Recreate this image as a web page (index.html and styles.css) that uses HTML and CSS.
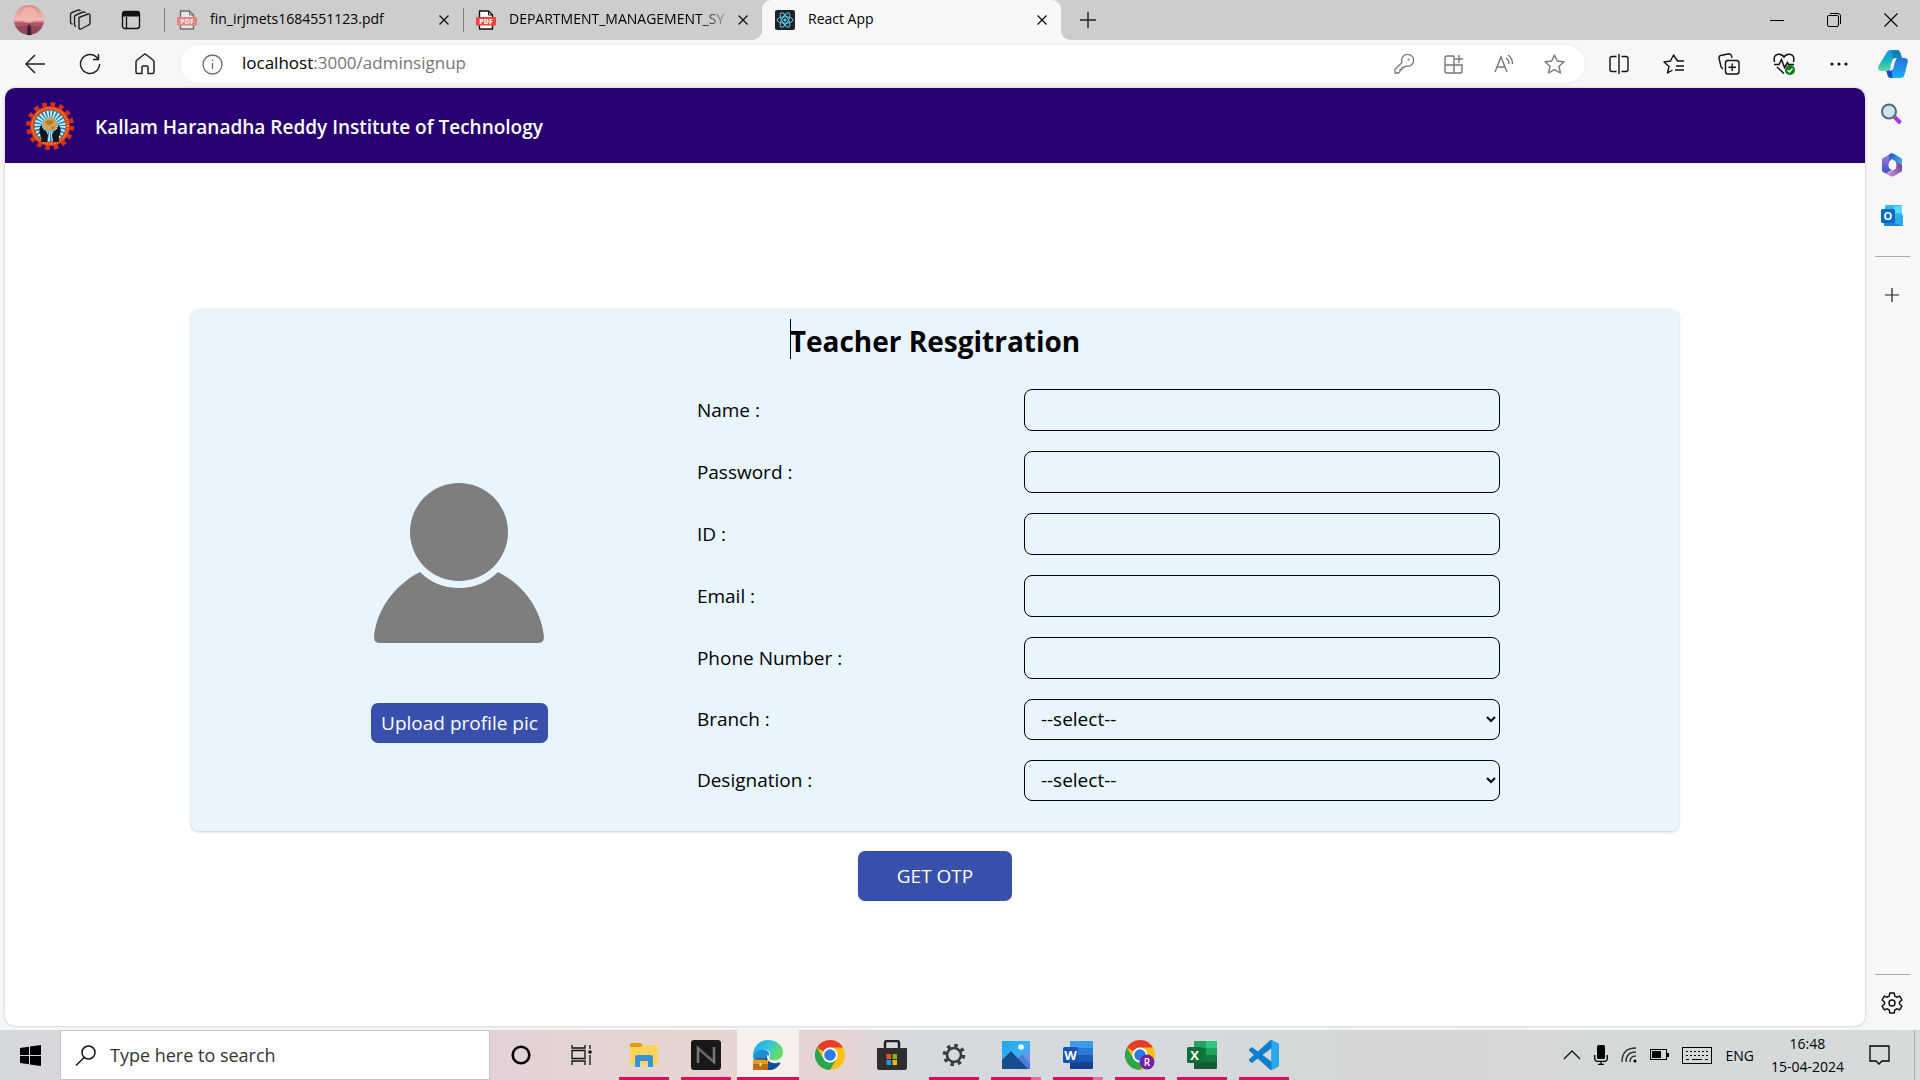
FILE: index.html
```html
<!DOCTYPE html>
<html lang="en">
<head>
<meta charset="utf-8">
<title>React App</title>
<link rel="stylesheet" href="styles.css">
</head>
<body>
<svg class="defs" aria-hidden="true">
  <defs>
    <linearGradient id="g-sun" x1="0" y1="0" x2="0" y2="1"><stop offset="0" stop-color="#d98c8c"/><stop offset=".5" stop-color="#f3bcae"/><stop offset=".6" stop-color="#b5546a"/><stop offset="1" stop-color="#9b5a5a"/></linearGradient>
    <linearGradient id="g-copA" x1="0" y1="0" x2="0" y2="1"><stop offset="0" stop-color="#1591d8"/><stop offset=".5" stop-color="#1ab2c4"/><stop offset="1" stop-color="#5fdc95"/></linearGradient>
    <linearGradient id="g-copB" x1="0" y1="0" x2="0" y2="1"><stop offset="0" stop-color="#2a6fe0"/><stop offset="1" stop-color="#19b0f5"/></linearGradient>
    <linearGradient id="g-edge" x1="0" y1="0" x2="1" y2=".4"><stop offset="0" stop-color="#1fa3e8"/><stop offset=".5" stop-color="#2fc2df"/><stop offset="1" stop-color="#65df60"/></linearGradient>
    <linearGradient id="g-photo" x1="0" y1="0" x2="1" y2="1"><stop offset="0" stop-color="#1fa4ea"/><stop offset=".5" stop-color="#37b3f5"/><stop offset="1" stop-color="#a070e0"/></linearGradient>
    <linearGradient id="g-m1" x1="0" y1="0" x2="0" y2="1"><stop offset="0" stop-color="#b77be0"/><stop offset="1" stop-color="#3a52c8"/></linearGradient>
    <linearGradient id="g-m2" x1="0" y1="0" x2="1" y2="1"><stop offset="0" stop-color="#2b50c8"/><stop offset="1" stop-color="#4ac4f0"/></linearGradient>
    <linearGradient id="g-m3" x1="0" y1="1" x2="1" y2="0"><stop offset="0" stop-color="#d99ae8"/><stop offset="1" stop-color="#5b3a90"/></linearGradient>
    <symbol id="chrome" viewBox="0 0 30 30"><circle cx="15" cy="15" r="15" fill="#fbc116"/><path d="M15 0A15 15 0 0 1 28 7.500H15A7.500 7.500 0 0 0 8.500 11.300L2 7.500A15 15 0 0 1 15 0Z" fill="#e33b2e"/><path d="M2 7.500A15 15 0 0 0 15 30L21.500 18.800A7.500 7.500 0 0 1 8.500 18.800Z" fill="#2da44e"/><circle cx="15" cy="15" r="7.500" fill="#fff"/><circle cx="15" cy="15" r="5.800" fill="#2c7be5"/></symbol>
    <symbol id="x" viewBox="0 0 12 12"><path d="M1.500 1.500l9 9m0-9l-9 9" fill="none" stroke="#111" stroke-width="1.300"/></symbol>
    <symbol id="plus" viewBox="0 0 18 18"><path d="M9 1v16M1 9h16" fill="none" stroke="#222" stroke-width="1.400"/></symbol>
    <symbol id="pdf" viewBox="0 0 20 20"><path d="M3.500 1h9l4 4v14h-13z" fill="#fff" stroke="#111" stroke-width="1.400"/><path d="M12.500 1v4h4" fill="none" stroke="#111"/><rect y="7" width="20" height="8.500" rx="1" fill="#f8403b"/><text x="10" y="14" text-anchor="middle" class="pdf-text">PDF</text></symbol>
    <symbol id="gear" viewBox="0 0 24 24"><path d="M9.800 2h4.400l.6 3.100 1.900 1.100 3-1.100 2.200 3.900-2.400 2v2l2.400 2-2.200 3.900-3-1.100-1.900 1.100-.6 3.100H9.800l-.6-3.100-1.900-1.100-3 1.100L2.100 15l2.400-2v-2l-2.400-2 2.200-3.900 3 1.100 1.900-1.100z" fill="none" stroke="#111" stroke-width="1.500" stroke-linejoin="round"/><circle cx="12" cy="12" r="3" fill="none" stroke="#111" stroke-width="1.500"/></symbol>
  </defs>
</svg>

<div class="window">
  <header class="tabstrip">
    <button class="lead" aria-label="Profile"><svg width="30" height="30" viewBox="0 0 30 30"><circle cx="15" cy="15" r="15" fill="url(#g-sun)"/><circle cx="15" cy="10" r="8" fill="#f3b7b0" opacity=".7"/><path d="M13 30l.5-8 1.500-3 2 3 .5 8z" fill="#241827"/><path d="M2 22q13-3 26 0a15 15 0 0 1-26 0z" fill="#63304a" opacity=".35"/></svg></button>
    <button class="lead" aria-label="Workspaces"><svg width="22" height="22" viewBox="0 0 22 22" fill="none" stroke="#222" stroke-width="1.400" stroke-linejoin="round"><path d="M10 8.500L19 5q2-.5 2 1.500v7.500q0 1.500-1.500 2L12 20q-2 .6-2-1.500zM7 17.500q-1.500-.3-1.500-2V8q0-1.500 1.500-2l7-3q2-.5 2.500 1M3.500 15Q1.500 15 1.500 13V5.500q0-1.500 1.500-2L9 1.200q1.500-.5 2.500.6"/></svg></button>
    <button class="lead" aria-label="Tab actions"><svg width="20" height="20" viewBox="0 0 20 20"><rect x="1.500" y="1.500" width="17" height="17" rx="2.500" fill="none" stroke="#111" stroke-width="1.400"/><path d="M1 6.500V4a3 3 0 0 1 3-3h12a3 3 0 0 1 3 3v2.500z" fill="#111"/><path d="M5.500 7v11" stroke="#111" stroke-width="1.300"/></svg></button>
    <div class="tab">
      <svg class="faded" width="20" height="20"><use href="#pdf"/></svg>
      <span class="tab-title">fin_irjmets1684551123.pdf</span>
      <button class="close" aria-label="Close tab"><svg width="12" height="12"><use href="#x"/></svg></button>
    </div>
    <div class="tab">
      <svg width="20" height="20"><use href="#pdf"/></svg>
      <span class="tab-title clipped">DEPARTMENT_MANAGEMENT_SY</span>
      <button class="close" aria-label="Close tab"><svg width="12" height="12"><use href="#x"/></svg></button>
    </div>
    <div class="tab active">
      <svg width="20" height="20" viewBox="0 0 20 20"><rect width="20" height="20" rx="2" fill="#222"/><g fill="none" stroke="#5ccfee" stroke-width="1"><ellipse cx="10" cy="10" rx="8" ry="3.200"/><ellipse cx="10" cy="10" rx="8" ry="3.200" transform="rotate(60 10 10)"/><ellipse cx="10" cy="10" rx="8" ry="3.200" transform="rotate(120 10 10)"/></g><circle cx="10" cy="10" r="1.600" fill="#5ccfee"/></svg>
      <span class="tab-title">React App</span>
      <button class="close" aria-label="Close tab"><svg width="12" height="12"><use href="#x"/></svg></button>
    </div>
    <button class="newtab" aria-label="New tab"><svg width="18" height="18"><use href="#plus"/></svg></button>
    <div class="controls">
      <button aria-label="Minimize"><svg width="14" height="14"><path d="M0 7.500h14" stroke="#000"/></svg></button>
      <button aria-label="Restore"><svg width="14" height="14" fill="none" stroke="#000"><rect x=".5" y="2.500" width="11" height="11" rx="1.500"/><path d="M3 .5h8q2.500 0 2.500 2.500v8"/></svg></button>
      <button aria-label="Close"><svg width="14" height="14"><path d="M.5.500l13 13m0-13l-13 13" stroke="#000" stroke-width="1.100"/></svg></button>
    </div>
  </header>

  <nav class="toolbar">
    <button class="nav" aria-label="Back"><svg width="22" height="22" viewBox="0 0 22 22" fill="none" stroke="#222" stroke-width="1.500"><path d="M21 11H2M11 2l-9 9 9 9"/></svg></button>
    <button class="nav" aria-label="Refresh"><svg width="22" height="22" viewBox="0 0 22 22" fill="none" stroke="#222" stroke-width="1.500"><path d="M20.500 11A9.500 9.500 0 1 1 17 3.600l2 2.400M19.500 1v5.500H14"/></svg></button>
    <button class="nav" aria-label="Home"><svg width="20" height="22" viewBox="0 0 20 22" fill="none" stroke="#222" stroke-width="1.500" stroke-linejoin="round"><path d="M1 9q0-1 1-2l7-5.500q1-.8 2 0L18 7q1 1 1 2v10q0 1.500-1.500 1.500H13V14q0-1-1-1H8q-1 0-1 1v6.500H2.500Q1 20.500 1 19z"/></svg></button>
    <div class="address">
      <svg width="21" height="21" viewBox="0 0 21 21" fill="none" stroke="#6b6b6b" stroke-width="1.300"><circle cx="10.500" cy="10.500" r="9.500"/><path d="M10.500 9v6M10.500 5.500V7"/></svg>
      <span class="url"><b>localhost</b>:3000/adminsignup</span>
      <span class="actions">
        <svg width="20" height="20" viewBox="0 0 20 20" fill="none" stroke="#777" stroke-width="1.300" stroke-linejoin="round"><path d="M8 8.500A6 6 0 1 1 11.500 12L10 13.500H8V15.500H6V17.500L4.500 19H1V15.500z"/><circle cx="14.500" cy="5.500" r="1" fill="#777" stroke="none"/></svg>
        <svg width="20" height="20" viewBox="0 0 20 20" fill="none" stroke="#777" stroke-width="1.400"><path d="M10 2H3Q1 2 1 4v13q0 2 2 2h13q2 0 2-2v-6H1M10 2v17M15 1v8M11 5h8"/></svg>
        <svg width="20" height="20" viewBox="0 0 20 20" fill="none" stroke="#777" stroke-width="1.400"><path d="M1 18L7 3l6 15M3 13h8M12 4q3 2 3 6M14 1q4.500 3 4.500 9"/></svg>
        <svg width="21" height="20" viewBox="0 0 21 20" fill="none" stroke="#777" stroke-width="1.400" stroke-linejoin="round"><path d="M10.500 1l2.800 6 6.700.8-5 4.500 1.400 6.700-5.900-3.400L4.600 19 6 12.300 1 7.800 7.700 7z"/></svg>
      </span>
    </div>
    <div class="tools">
      <button aria-label="Split screen"><svg width="20" height="20" viewBox="0 0 20 20" fill="none" stroke="#111" stroke-width="1.400"><path d="M10 0v20M7.500 2.500H3q-2 0-2 2v11q0 2 2 2h4.500M12.500 2.500H17q2 0 2 2v11q0 2-2 2h-4.500"/></svg></button>
      <button aria-label="Favorites"><svg width="22" height="20" viewBox="0 0 22 20" fill="none" stroke="#111" stroke-width="1.400" stroke-linejoin="round"><path d="M21 7h-6.500L10.500 1 7.500 7 1 8l5 4.500L4.500 19l5-3M13 12h8M12 16h9"/></svg></button>
      <button aria-label="Collections"><svg width="22" height="22" viewBox="0 0 22 22" fill="none" stroke="#111" stroke-width="1.400"><rect x="7.500" y="7.500" width="13.500" height="13.500" rx="2.500"/><path d="M14.200 10.500v7.500M10.500 14.200H18M5 16L3 14 1 5q-.3-2 1.500-2.500L11 .8q2 0 2.500 2l.5 2"/></svg></button>
      <button aria-label="Browser essentials"><svg width="22" height="22" viewBox="0 0 22 22" fill="none" stroke="#111" stroke-width="1.500"><path d="M1.500 9Q0 2 5 1.200 9 .7 11 4q2-3.300 6-2.800 5 .8 3.500 7.800M1 11.500h5l2.500-5 3 8 3-5 1 2H21M4 14l7 6.500"/><circle cx="17" cy="17" r="5" fill="#117a18" stroke="none"/><path d="M14.500 17l2 2 3-3.500" stroke="#fff" stroke-width="1.300"/></svg></button>
      <button aria-label="More"><svg width="18" height="4" fill="#111"><circle cx="2" cy="2" r="1.600"/><circle cx="9" cy="2" r="1.600"/><circle cx="16" cy="2" r="1.600"/></svg></button>
    </div>
    <button class="copilot" aria-label="Copilot"><svg width="30" height="28" viewBox="0 0 30 28"><path d="M9 2Q10 0 13 0h6q3 0 4 5l1 3h-6q-3 0-4 3l-2 7q-1 3-4 3H4q-5 0-3.500-5z" fill="url(#g-copA)"/><path d="M14 0h5q3 0 4 5l1 3h-6q-2 0-3 1z" fill="#0b72a8" opacity=".6"/><path d="M18 8h8q5 0 3.500 5l-3 12q-1 3-4 3h-9q-3 0-4-3l-1-4q3 0 4-3z" fill="url(#g-copB)"/><path d="M8.500 21q3 0 4-3l1-2 1 12h-1q-3 0-4-3z" fill="#1546cf"/><path d="M15 10q1-2 4-2-1 1-2 4l-2 7q-1 2-4 2 1-1 2-4z" fill="#f7f7f7"/></svg></button>
  </nav>

  <div class="body">
    <main class="page">
      <div class="brand">
        <svg class="seal" width="50" height="50" viewBox="-25 -25 50 50"><circle r="21.500" fill="none" stroke="#d42f1c" stroke-width="5" stroke-dasharray="4.500 3.942"/><circle r="20" fill="#d63a20"/><circle r="17.800" fill="none" stroke="#e6a030" stroke-width="2" stroke-dasharray="1 1"/><circle r="15.500" fill="#188fca"/><circle r="10" fill="none" stroke="#d8f2fb" stroke-width="11" stroke-dasharray="1.300 1.318"/><circle cy="-2" r="7" fill="#d6a24a"/><path d="M-5-4l4-2 5 1-2 3-4 1zM1 1l4-1-2 4z" fill="#a9793b"/><path d="M-8-2q-1 5 4 7l2 4-1 7h-6q1-5-1-8-2-5 2-10zM8-2q1 5-4 7l-2 4 1 7h6q-1-5 1-8 2-5-2-10z" fill="#17131f"/></svg>
        <span class="brand-name">Kallam Haranadha Reddy Institute of Technology</span>
      </div>
      <form class="signup">
        <section class="card">
          <h1 class="title"><span class="caret"></span>Teacher Resgitration</h1>
          <div class="columns">
            <div class="profile">
              <svg width="170" height="160" viewBox="0 0 170 160" fill="#7e7e7e"><circle cx="85" cy="49" r="49"/><path d="M46 89Q62 105 85 105T124 89C152 103 168 130 170 154Q170 160 164 160H6Q0 160 0 154C2 130 18 103 46 89Z"/></svg>
              <button type="button" class="upload">Upload profile pic</button>
            </div>
            <div class="fields">
              <label for="name">Name :</label><input id="name" type="text">
              <label for="password">Password :</label><input id="password" type="password">
              <label for="id">ID :</label><input id="id" type="text">
              <label for="email">Email :</label><input id="email" type="email">
              <label for="phone">Phone Number :</label><input id="phone" type="tel">
              <label for="branch">Branch :</label><select id="branch"><option>--select--</option></select>
              <label for="designation">Designation :</label><select id="designation"><option>--select--</option></select>
            </div>
          </div>
        </section>
        <button type="button" class="otp">GET OTP</button>
      </form>
    </main>
    <aside class="sidebar">
      <button aria-label="Search"><svg width="22" height="22" viewBox="0 0 22 22"><path d="M13.500 14l6 6" stroke="#a838ee" stroke-width="4"/><circle cx="8" cy="8.500" r="7" fill="#c9e6f7" stroke="#666" stroke-width="2"/></svg></button>
      <button aria-label="Microsoft 365"><svg width="22" height="24" viewBox="0 0 22 24"><path d="M11 0L2 5Q1 5.600 1 7v10q0 1.400 1 2l3 1.500L11 17l-3-2V9l3-3z" fill="url(#g-m1)"/><path d="M9 1q2-1.500 4 0l7 4q1 .6 1 2v8l-6-4V9l-4-3-3 2V1.600z" fill="url(#g-m2)"/><path d="M21 12v5q0 1.400-1 2l-7 4q-2 1-4 0l-5-3h2q2 0 4-1.500l5-3V9z" fill="url(#g-m3)"/><circle cx="11.500" cy="12" r="4" fill="#f7f7f7"/></svg></button>
      <button aria-label="Outlook"><svg width="22" height="22" viewBox="0 0 22 22"><rect x="4" width="17" height="14" rx="1.500" fill="#31b7f0"/><rect x="13" y="1" width="8" height="7" fill="#5ed7fb"/><path d="M3 21V12l8 4 11-6v10q0 1-1 1z" fill="#1688d8"/><path d="M22 10L11 17l10 4q1 0 1-1z" fill="#2cabed"/><rect y="4" width="14" height="14" rx="1.500" fill="#0868c2"/><text x="7" y="15" text-anchor="middle" class="app-letter small">O</text></svg></button>
      <hr>
      <button aria-label="Customize"><svg width="16" height="16"><use href="#plus"/></svg></button>
      <div class="settings"><hr><button aria-label="Settings"><svg width="24" height="24"><use href="#gear"/></svg></button></div>
    </aside>
  </div>
</div>

<footer class="taskbar">
  <button class="start" aria-label="Start"><svg width="21" height="21" viewBox="0 0 21 21"><path d="M0 3l9-1.300V10H0zM10 1.500L21 0v10H10zM0 11h9v8.300L0 18zM10 11h11v10l-11-1.500z"/></svg></button>
  <label class="search"><svg width="21" height="21" viewBox="0 0 21 21" fill="none" stroke="#111" stroke-width="1.500"><circle cx="13.500" cy="7.500" r="6.500"/><path d="M9 12.500L1 20.500"/></svg><input type="text" placeholder="Type here to search"></label>
  <div class="apps">
    <button class="app" aria-label="Cortana"><svg width="20" height="20"><circle cx="10" cy="10" r="8.300" fill="none" stroke="#000" stroke-width="2.600"/></svg></button>
    <button class="app" aria-label="Task view"><svg width="22" height="20" fill="none" stroke="#111" stroke-width="1.300"><path d="M1 0v3h13V0M1 20v-4h13v4M1 5.500h13v8H1zM19 0v4M19 10v10"/><rect x="17.500" y="5.500" width="3" height="3" fill="#000" stroke="none"/></svg></button>
    <button class="app open" aria-label="File Explorer"><svg width="28" height="24" viewBox="0 0 28 24"><path d="M0 2Q0 0 2 0h9l2 4H0z" fill="#dfa000"/><path d="M0 4h11l2-2h13q2 0 2 2v18H0z" fill="#ffd35c"/><path d="M5 24v-9q0-3 3-3h12q3 0 3 3v9h-5v-6h-8v6z" fill="#3593dd"/></svg></button>
    <button class="app open" aria-label="N"><svg width="30" height="30" viewBox="0 0 30 30"><rect width="30" height="30" rx="3" fill="#17181a"/><path d="M7 23V8l16 14V7" fill="none" stroke="#777" stroke-width="2.600"/><path d="M9 9l13 11" stroke="#444" stroke-width="1"/></svg></button>
    <button class="app open current" aria-label="Edge"><svg width="30" height="30" viewBox="0 0 30 30"><path d="M1 19A14.500 14.500 0 0 0 27 24q1-2-1-1.500-6 2-10-1-4-4-1-9L8 11z" fill="#0f4f98"/><path d="M0 16C0 6 7 0 15 0c9 0 15 6 15 12 0 6-5 9-10 8-4 0-4-2-3-4 1-4-2-7-7-6-5 0-9 3-10 6z" fill="url(#g-edge)"/><path d="M0 16C2 11 7 9 11 10c4 0 6 3 5 6-2-2-4 1-4 5H1z" fill="#1c8fd6"/><rect y="20" width="15" height="10" rx="1" fill="#bc6c14"/><path d="M0 20h15v4H0z" fill="#e39a2c"/><path d="M4 20v-1.500h7V20" fill="none" stroke="#7b420d"/><rect x="6.500" y="23" width="2" height="3" fill="#ffe06a"/></svg></button>
    <button class="app" aria-label="Chrome"><svg width="30" height="30"><use href="#chrome"/></svg></button>
    <button class="app" aria-label="Store"><svg width="30" height="30" viewBox="0 0 30 30"><path d="M8 9V3q0-2 2-2h10q2 0 2 2v6" fill="none" stroke="#222" stroke-width="2.500"/><path d="M0 8h30v20q0 2-2 2H2q-2 0-2-2z" fill="#2e2e2e"/><path fill="#f25022" d="M9.500 14H14v5H9.500z"/><path fill="#7fba00" d="M15.500 14H20v5h-4.500z"/><path fill="#00a4ef" d="M9.500 20H14v5H9.500z"/><path fill="#ffb900" d="M15.500 20H20v5h-4.500z"/></svg></button>
    <button class="app open" aria-label="Settings"><svg width="24" height="24" viewBox="-12 -12 24 24" fill="none" stroke="#3b3b3b"><circle r="7" stroke-width="2.600"/><circle r="9.500" stroke-width="3.500" stroke-dasharray="3.400 4.061"/></svg></button>
    <button class="app open multi" aria-label="Photos"><svg width="28" height="28" viewBox="0 0 28 28"><rect width="28" height="28" rx="1" fill="url(#g-photo)"/><path d="M14 20l6-7 8 10v5H14z" fill="#4b7cd6"/><path d="M0 19l9-9 17 18H0z" fill="#174c91"/><circle cx="19" cy="6" r="2.800" fill="#fff"/></svg></button>
    <button class="app open multi" aria-label="Word"><svg width="30" height="28" viewBox="0 0 30 28"><path d="M7 0h22q1 0 1 1v6H7z" fill="#3d9ce9"/><path d="M7 7h23v7H7z" fill="#2a7bd5"/><path d="M7 14h23v7H7z" fill="#1b5abc"/><path d="M7 21h23v6q0 1-1 1H7z" fill="#133f94"/><rect y="6" width="15" height="16" rx="1.500" fill="#1854b5"/><text x="7.500" y="19" text-anchor="middle" class="app-letter">W</text></svg></button>
    <button class="app open" aria-label="Chrome profile"><svg width="30" height="30"><use href="#chrome"/><circle cx="22" cy="22" r="7.500" fill="#7420a0"/><text x="22" y="26" text-anchor="middle" class="profile-letter">R</text></svg></button>
    <button class="app open" aria-label="Excel"><svg width="30" height="28" viewBox="0 0 30 28"><path d="M7 1q0-1 1-1h11v7H7z" fill="#21a366"/><path d="M19 0h10q1 0 1 1v6H19z" fill="#33c481"/><path d="M7 7h12v14H7z" fill="#10773f"/><path d="M19 7h11v7H19z" fill="#21a366"/><path d="M19 14h11v7H19zM7 21h12v7H7z" fill="#107c41"/><path d="M7 21h23v6q0 1-1 1H8q-1 0-1-1z" fill="#185c37"/><rect y="6" width="15" height="16" rx="1.500" fill="#10703a"/><text x="7.500" y="19" text-anchor="middle" class="app-letter">X</text></svg></button>
    <button class="app open" aria-label="VS Code"><svg width="30" height="30" viewBox="0 0 24 24"><path fill="#0a7fcb" d="M23.150 2.587L18.210.21a1.494 1.494 0 0 0-1.705.29l-9.460 8.630-4.120-3.128a.999.999 0 0 0-1.276.057L.327 7.261A1 1 0 0 0 .326 8.740L3.899 12 .326 15.260a1 1 0 0 0 .001 1.479L1.650 17.940a.999.999 0 0 0 1.276.057l4.120-3.128 9.460 8.630a1.492 1.492 0 0 0 1.704.29l4.942-2.377A1.500 1.500 0 0 0 24 20.060V3.939a1.500 1.500 0 0 0-.85-1.352zm-5.146 14.861L10.826 12l7.178-5.448v10.896z"/><path fill="#2aa9f3" d="M18 .2l5.150 2.387A1.500 1.500 0 0 1 24 3.939V20.060a1.500 1.500 0 0 1-.85 1.352L18 23.800z"/></svg></button>
  </div>
  <div class="tray">
    <svg width="18" height="10" fill="none" stroke="#111" stroke-width="1.300"><path d="M1 9l8-8 8 8"/></svg>
    <svg width="14" height="20" viewBox="0 0 14 20"><rect x="3" width="8" height="14" rx="1.500"/><path d="M.7 10v3q0 3.300 3 3.300h6.600q3 0 3-3.300v-3M7 16v3M4 19.300h6" fill="none" stroke="#000" stroke-width="1.300"/></svg>
    <svg width="16" height="16" viewBox="0 0 16 16" fill="none" stroke="#333" stroke-width="1.400"><path d="M1 15Q1 1 15 1M5 15Q5 5 15 5M9 15Q9 9 15 9"/><circle cx="14" cy="14" r="1.500" fill="#000" stroke="none"/></svg>
    <svg width="19" height="12"><rect x=".5" y=".5" width="16" height="10" fill="none" stroke="#000"/><path d="M2 2h9v7H2zM17 4h2v4h-2z"/></svg>
    <svg width="30" height="17" fill="none" stroke="#000"><rect x=".5" y=".5" width="29" height="16"/><path d="M4 4.500h22M4 8.500h22" stroke-dasharray="2 2"/><path d="M4 12.500h3M10 12.500h10M23 12.500h3"/></svg>
    <span class="lang">ENG</span>
    <span class="clock"><span>16:48</span><span>15-04-2024</span></span>
    <svg class="notice" width="21" height="20" fill="none" stroke="#000" stroke-width="1.300"><path d="M1 1h19v15h-7l-3 3-3-3H1z"/></svg>
    <span class="desktop-edge"></span>
  </div>
</footer>
</body>
</html>
```
FILE: styles.css
```css
* { box-sizing: border-box; }
body {
  margin: 0;
  min-height: 100vh;
  display: flex;
  flex-direction: column;
  background: #f7f7f7;
  color: #000;
  font-family: "Open Sans", "Noto Sans", sans-serif;
  font-size: 19px;
}
button {
  padding: 0;
  border: 0;
  background: none;
  color: inherit;
  font: inherit;
  display: flex;
  align-items: center;
  justify-content: center;
}
svg { display: block; flex: none; }
.defs { position: absolute; width: 0; height: 0; }
.pdf-text { font-size: 7px; font-weight: 800; fill: #fff; }
.app-letter { font-size: 13px; font-weight: 700; fill: #fff; }
.app-letter.small { font-size: 11px; }
.profile-letter { font-size: 10px; font-weight: 600; fill: #fff; }

.window { flex: 1; display: flex; flex-direction: column; }

/* Tab strip */
.tabstrip {
  display: flex;
  height: 40px;
  padding-left: 3px;
  background: #cdcdcd;
  font-size: 14px;
}
.lead { width: 51px; }
.tab {
  display: flex;
  align-items: center;
  gap: 13px;
  width: 299px;
  padding: 0 13px;
  position: relative;
}
.tab:not(.active)::before {
  content: "";
  position: absolute;
  left: 0;
  top: 8px;
  bottom: 8px;
  width: 1px;
  background: #808080;
}
.lead + .tab { margin-left: 8px; }
.tab-title { flex: 1; min-width: 0; overflow: hidden; white-space: nowrap; line-height: 20px; padding-bottom: 2px; }
.clipped {
  margin-right: -8px;
  mask-image: linear-gradient(90deg, #000 86%, transparent 100%);
}
.faded { opacity: .5; }
.tab.active { background: #f7f7f7; border-radius: 9px 9px 0 0; }
.tab.active::before, .tab.active::after {
  content: "";
  position: absolute;
  bottom: 0;
  width: 10px;
  height: 10px;
}
.tab.active::before { left: -10px; background: radial-gradient(circle at 0 0, transparent 10px, #f7f7f7 10px); }
.tab.active::after { right: -10px; background: radial-gradient(circle at 100% 0, transparent 10px, #f7f7f7 10px); }
.newtab { width: 54px; }
.controls { display: flex; margin-left: auto; padding-right: 1px; }
.controls button { width: 57px; }

/* Toolbar */
.toolbar {
  display: flex;
  align-items: center;
  height: 48px;
  padding-left: 7px;
}
.nav { width: 55px; }
.address {
  flex: 1;
  display: flex;
  align-items: center;
  gap: 19px;
  height: 38px;
  margin-left: 8px;
  padding: 0 20px 0 22px;
  border-radius: 19px;
  background: #fff;
  box-shadow: 0 0 3px #e2e2e2;
}
.url { color: #767676; font-size: 17px; line-height: 24px; padding-bottom: 2px; }
.url b { color: #000; font-weight: 400; }
.actions { display: flex; gap: 30px; margin-left: auto; }
.tools { display: flex; margin: 0 0 0 6px; }
.tools button { width: 55px; height: 38px; }
.copilot { width: 54px; }

/* Page and browser sidebar */
.body { flex: 1; display: flex; padding: 0 0 4px 5px; }
.page {
  flex: 1;
  display: flex;
  flex-direction: column;
  overflow: hidden;
  border-radius: 10px;
  background: #fff;
  box-shadow: 0 0 3px #bbb;
}
.brand {
  display: flex;
  align-items: center;
  gap: 20px;
  height: 75px;
  padding: 0 20px;
  background: #280073;
  color: #fff;
}
.brand-name { font-weight: 600; padding-top: 2px; }
.signup {
  flex: 1;
  display: flex;
  flex-direction: column;
  align-items: center;
  justify-content: center;
  gap: 20px;
  padding-top: 20px;
}
.card {
  width: 80%;
  padding: 12px 20px 30px;
  border-radius: 8px;
  background: #e8f5ff;
  box-shadow: 0 1px 3px #ccc;
}
.title {
  width: fit-content;
  margin: 0 auto 28px;
  position: relative;
  font-size: 28px;
  line-height: 40px;
  font-weight: 700;
}
.caret {
  position: absolute;
  left: 0;
  top: -2px;
  width: 1px;
  height: 40px;
  background: #000;
}
.columns { display: grid; grid-template-columns: 31% 1fr; }
.profile {
  display: flex;
  flex-direction: column;
  align-items: center;
  gap: 60px;
  padding: 94px 0 0 48px;
}
.upload, .otp { background: #3850ac; color: #fff; }
.upload { height: 40px; padding: 0 10px; border-radius: 7px; }
.otp { height: 50px; padding: 0 39px; border-radius: 7px; }
.fields {
  display: grid;
  grid-template-columns: 327px minmax(0, 476px);
  align-items: center;
  row-gap: 20px;
  padding-left: 37px;
}
.fields input, .fields select {
  width: 100%;
  height: 42px;
  padding: 0 12px;
  border: 1px solid #000;
  border-radius: 8px;
  background: transparent;
  color: #000;
  font: inherit;
}
.fields select { height: 41px; padding-right: 0; }
.sidebar {
  width: 55px;
  display: flex;
  flex-direction: column;
  align-items: center;
  padding-right: 1px;
}
.sidebar button { width: 50px; height: 51px; }
.sidebar hr { width: 35px; margin: 15px 0 12px; border: 0; border-top: 1px solid #aaa; }
.settings { display: flex; flex-direction: column; align-items: center; margin-top: auto; }
.settings hr { margin: 0 0 4px; }
.settings button { height: 47px; }

/* Taskbar */
.taskbar {
  display: flex;
  height: 50px;
  font-size: 18px;
  background: linear-gradient(90deg, #d5d8dc 0, #d9d6da 12%, #e3d2d6 26%, #e6d6d0 36%, #e6d3d4 44%, #d4dade 47%, #d5dade 60%, #d5d7d6 72%, #d5dada 100%);
}
.start { width: 60px; }
.search {
  display: flex;
  align-items: center;
  gap: 14px;
  width: 430px;
  padding: 0 14px;
  border: 1px solid #c3c6c9;
  background: #fff;
}
.search input { flex: 1; min-width: 0; border: 0; padding: 0; font: inherit; }
.search input::placeholder { color: #333; opacity: 1; }
.apps { display: flex; }
.app { width: 62px; position: relative; }
.app:first-child { width: 61px; }
.app.open::after {
  content: "";
  position: absolute;
  left: 6px;
  right: 6px;
  bottom: 0;
  height: 3px;
  background: #e3085e;
}
.app.current { background: #f5f0ee; }
.app.current::after { left: 0; right: 0; }
.app.multi::after { background: linear-gradient(90deg, #e3085e 80%, #ee6aa0 80%); }
.tray {
  display: flex;
  align-items: center;
  gap: 13px;
  margin-left: auto;
  padding-right: 5px;
  font-size: 14px;
}
.clock {
  display: flex;
  flex-direction: column;
  align-items: center;
  margin: 0 12px 0 4px;
  line-height: 23px;
}
.desktop-edge { width: 1px; height: 50px; margin-left: 11px; background: #a9acad; }
```
